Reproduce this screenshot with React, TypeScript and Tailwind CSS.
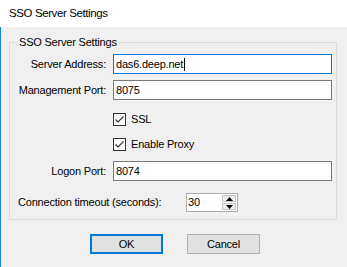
import React from "react";

const font = { fontFamily: '"Liberation Sans", Arial, sans-serif' };

function CheckRow({ label, mt }: { label: string; mt: string }) {
  return (
    <div className={`flex items-center ml-[103px] ${mt}`}>
      <div className="w-[13px] h-[13px] border border-[#333333] bg-white flex items-center justify-center">
        <svg width="11" height="11" viewBox="0 0 11 11">
          <polyline points="1.5,5.5 4,8 9.5,2.5" fill="none" stroke="#333333" strokeWidth="1.2" />
        </svg>
      </div>
      <span className="ml-[5px] leading-[13px]">{label}</span>
    </div>
  );
}

function TextRow({ label, value, focused, mt }: { label: string; value: string; focused?: boolean; mt: string }) {
  return (
    <div className={`flex items-center ${mt}`}>
      <span className="w-[96px] text-right leading-[13px]">{label}</span>
      <div
        className={`ml-[7px] w-[219px] h-[20px] bg-white border flex items-center pl-[2px] ${
          focused ? "border-[#0078d7]" : "border-[#7a7a7a]"
        }`}
      >
        <span className="leading-[13px]">{value}</span>
        {focused && <span className="w-[1px] h-[13px] bg-black ml-[1px]" />}
      </div>
    </div>
  );
}

export default function App() {
  return (
    <div className="w-[347px] h-[267px] bg-[#f0f0f0] flex flex-col text-black text-[11px] tracking-[-0.2px]" style={font}>
      <div className="h-[27px] bg-white flex items-center pl-[9px] text-[11.5px] tracking-[-0.4px]">
        SSO Server Settings
      </div>
      <div className="flex-1 border-l border-[#1a86d9] flex flex-col">
        <fieldset className="ml-[8px] mt-[9px] w-[328px] border border-[#dcdcdc] px-0 pb-[7px]">
          <legend className="ml-[7px] px-[2px] leading-[13px]">SSO Server Settings</legend>
          <TextRow label="Server Address:" value="das6.deep.net" focused mt="mt-[5px]" />
          <TextRow label="Management Port:" value="8075" mt="mt-[6px]" />
          <CheckRow label="SSL" mt="mt-[13px]" />
          <CheckRow label="Enable Proxy" mt="mt-[12px]" />
          <TextRow label="Logon Port:" value="8074" mt="mt-[10px]" />
          <div className="flex items-center mt-[12px] pl-[8px]">
            <span className="w-[168px] leading-[13px]">Connection timeout (seconds):</span>
            <div className="w-[52px] h-[19px] border border-[#acacac] bg-white flex">
              <div className="flex-1 flex items-center pl-[1px]">
                <span className="leading-[13px]">30</span>
              </div>
              <div className="w-[16px] flex flex-col gap-[1px] p-[1px]">
                <div className="flex-1 bg-[#f0f0f0] border border-[#c4c4c4] flex items-center justify-center">
                  <svg width="7" height="4" viewBox="0 0 7 4">
                    <polygon points="3.5,0 7,4 0,4" fill="#000" />
                  </svg>
                </div>
                <div className="flex-1 bg-[#f0f0f0] border border-[#c4c4c4] flex items-center justify-center">
                  <svg width="7" height="4" viewBox="0 0 7 4">
                    <polygon points="0,0 7,0 3.5,4" fill="#000" />
                  </svg>
                </div>
              </div>
            </div>
          </div>
        </fieldset>
        <div className="flex mt-[14px] ml-[89px]">
          <button className="w-[73px] h-[20px] bg-[#e1e1e1] border-2 border-[#0078d7] flex items-center justify-center leading-[13px]">
            OK
          </button>
          <button className="ml-[24px] w-[73px] h-[20px] bg-[#e1e1e1] border border-[#adadad] flex items-center justify-center leading-[13px]">
            Cancel
          </button>
        </div>
      </div>
    </div>
  );
}
